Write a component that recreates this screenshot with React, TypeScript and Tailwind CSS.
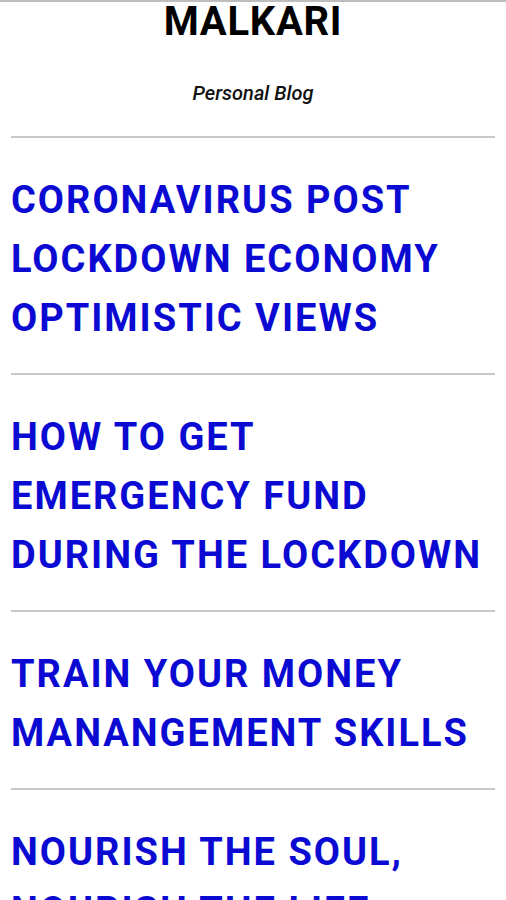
const POSTS = [
  ["CORONAVIRUS POST", "LOCKDOWN ECONOMY", "OPTIMISTIC VIEWS"],
  ["HOW TO GET", "EMERGENCY FUND", "DURING THE LOCKDOWN"],
  ["TRAIN YOUR MONEY", "MANANGEMENT SKILLS"],
  ["NOURISH THE SOUL,", "NOURISH THE LIFE"],
];

export default function App() {
  return (
    <div className="min-h-[900px] bg-white border-t-2 border-[#bdbdbd] font-['Roboto',sans-serif]">
      <header className="text-center">
        <h1 className="text-[40px] leading-[40px] font-bold tracking-[0.7px] text-black">
          MALKARI
        </h1>
        <p className="mt-[39px] text-[20px] leading-[24px] italic font-medium text-[#111]">
          Personal Blog
        </p>
      </header>

      <div className="mx-[11px] mt-[31px]">
        {POSTS.map((lines, i) => (
          <article key={i} className="border-t-2 border-[#c8c8c8] pt-[33px] pb-[25px]">
            <h2 className="text-[38px] leading-[59px] font-bold tracking-[2px] text-[#0a0ad2]">
              {lines.map((l) => (
                <span key={l} className="block whitespace-nowrap">
                  {l}
                </span>
              ))}
            </h2>
          </article>
        ))}
      </div>
    </div>
  );
}
